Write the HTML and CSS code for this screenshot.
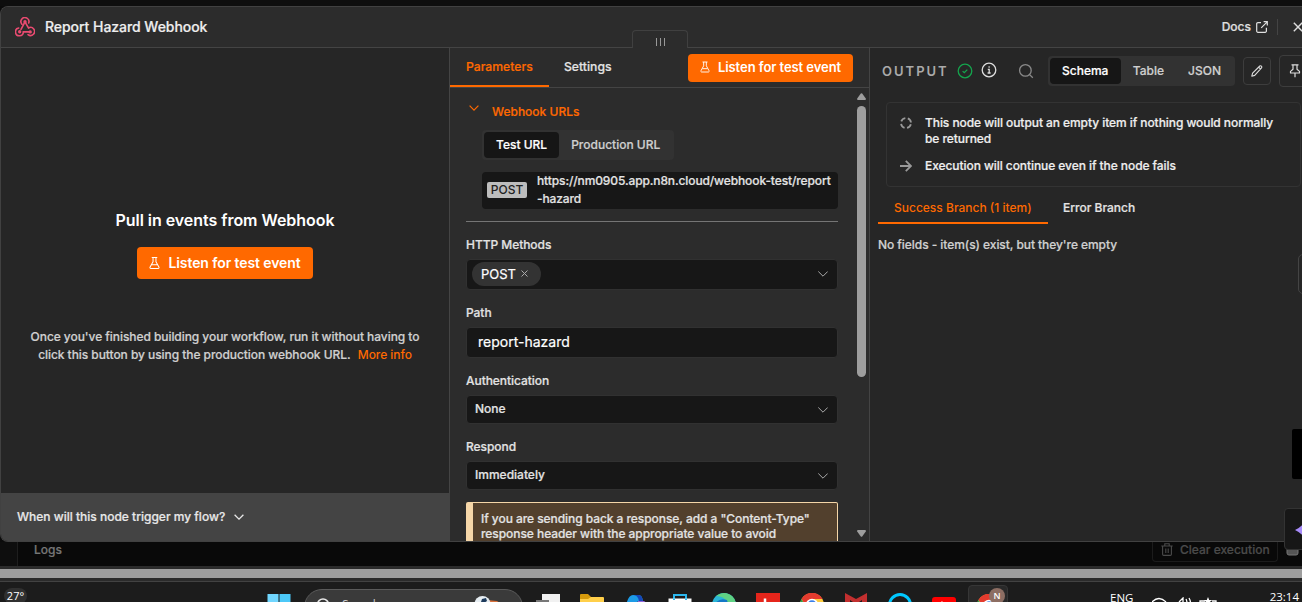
FILE: index.html
```html
<!DOCTYPE html>
<html lang="en">
<head>
    <meta charset="UTF-8">
    <title>Report Hazard Webhook</title>
    <link rel="stylesheet" href="styles.css">
</head>
<body>
    <div class="screen">
        <div class="canvas-top"></div>

        <div class="modal">
            <header class="modal-header">
                <svg class="webhook-icon" viewBox="0 0 20 20" fill="none" stroke="#ea4b71" stroke-width="1.6" stroke-linecap="round">
                    <path d="M6.9 7.2A4 4 0 1 1 13.7 6M10 4.8L6 12.4M10 4.8l3.5 6.2a4 4 0 1 1-.4 6.6M14.8 14.9H8.3A3.9 3.9 0 1 1 3.7 11"/>
                    <circle cx="10" cy="4.8" r=".9" fill="#ea4b71"/>
                    <circle cx="4.7" cy="14.8" r=".9" fill="#ea4b71"/>
                    <circle cx="15.2" cy="14.9" r=".9" fill="#ea4b71"/>
                </svg>
                <h1>Report Hazard Webhook</h1>
                <a href="#" class="docs-link">Docs
                    <svg width="12" height="12" viewBox="0 0 12 12" fill="none" stroke="currentColor" stroke-width="1.2">
                        <path d="M5 1.6H1.9A1.2 1.2 0 0 0 .7 2.8v7.3a1.2 1.2 0 0 0 1.2 1.2h7.3a1.2 1.2 0 0 0 1.2-1.2V6.8M7.6.7h3.7v3.7M11.2.8L5.2 6.8"/>
                    </svg>
                </a>
                <svg class="close-icon" viewBox="0 0 10 10" stroke="#ddd" stroke-width="1.4"><path d="M.8.8l8.4 8.4M9.2.8L.8 9.2"/></svg>
            </header>

            <div class="panels">
                <section class="input-panel">
                    <div class="input-content">
                        <h2>Pull in events from Webhook</h2>
                        <button class="btn-listen btn-large">
                            <svg viewBox="0 0 12 14" fill="none" stroke="#fff" stroke-width="1.1" stroke-linejoin="round"><path d="M3 1h6M4.4 1v4.6L1.2 11.4c-.5.9 0 1.6.9 1.6h7.8c.9 0 1.4-.7.9-1.6L7.6 5.6V1M3 9h6"/></svg>
                            Listen for test event
                        </button>
                        <p>Once you've finished building your workflow, run it without having to<br>click this button by using the production webhook URL.&nbsp; <a href="#">More info</a></p>
                    </div>
                    <div class="trigger-help">
                        When will this node trigger my flow?
                        <svg width="10" height="6" viewBox="0 0 10 6" fill="none" stroke="currentColor" stroke-width="1.3"><path d="M.6.7L5 5.1 9.4.7"/></svg>
                    </div>
                </section>

                <section class="params-panel">
                    <div class="drag-handle"><i></i><i></i><i></i></div>
                    <div class="params-tabs">
                        <span class="params-tab active">Parameters</span>
                        <span class="params-tab">Settings</span>
                        <button class="btn-listen">
                            <svg viewBox="0 0 12 14" fill="none" stroke="#fff" stroke-width="1.1" stroke-linejoin="round"><path d="M3 1h6M4.4 1v4.6L1.2 11.4c-.5.9 0 1.6.9 1.6h7.8c.9 0 1.4-.7.9-1.6L7.6 5.6V1M3 9h6"/></svg>
                            Listen for test event
                        </button>
                    </div>
                    <div class="params-body">
                        <div class="params-form">
                            <div class="urls-title">
                                <svg width="10" height="6" viewBox="0 0 10 6" fill="none" stroke="currentColor" stroke-width="1.2"><path d="M.6.7L5 5.1 9.4.7"/></svg>
                                Webhook URLs
                            </div>
                            <div class="urls">
                                <div class="toggle url-toggle">
                                    <span class="toggle-item active">Test URL</span>
                                    <span class="toggle-item">Production URL</span>
                                </div>
                                <div class="url-box">
                                    <span class="method">POST</span>
                                    <span class="url">https://nm0905.app.n8n.cloud/webhook-test/report<br>-hazard</span>
                                </div>
                            </div>
                            <div class="field">
                                <label>HTTP Methods</label>
                                <div class="control tags">
                                    <span class="tag">POST <svg width="7" height="7" viewBox="0 0 7 7" stroke="#aaa" stroke-width="1"><path d="M.5.5l6 6M6.5.5l-6 6"/></svg></span>
                                    <svg class="arrow" viewBox="0 0 10 6" fill="none" stroke="currentColor"><path d="M.3.5L5 5.2 9.7.5"/></svg>
                                </div>
                            </div>
                            <div class="field">
                                <label>Path</label>
                                <div class="control path">report-hazard</div>
                            </div>
                            <div class="field small">
                                <label>Authentication</label>
                                <div class="control">None
                                    <svg class="arrow" viewBox="0 0 10 6" fill="none" stroke="currentColor"><path d="M.3.5L5 5.2 9.7.5"/></svg>
                                </div>
                            </div>
                            <div class="field small">
                                <label>Respond</label>
                                <div class="control">Immediately
                                    <svg class="arrow" viewBox="0 0 10 6" fill="none" stroke="currentColor"><path d="M.3.5L5 5.2 9.7.5"/></svg>
                                </div>
                            </div>
                            <div class="notice">If you are sending back a response, add a "Content-Type"<br>response header with the appropriate value to avoid</div>
                        </div>
                        <div class="scrollbar">
                            <svg width="9" height="7" viewBox="0 0 9 7" fill="#9e9e9e"><path d="M3.8.6a.9.9 0 0 1 1.4 0L8.8 5.6Q9.2 7 8 7H1Q-.2 7 .2 5.6z"/></svg>
                            <div class="thumb"></div>
                            <svg class="down" width="9" height="7" viewBox="0 0 9 7" fill="#9e9e9e"><path d="M3.8 6.4a.9.9 0 0 0 1.4 0L8.8 1.4Q9.2 0 8 0H1Q-.2 0 .2 1.4z"/></svg>
                        </div>
                    </div>
                </section>

                <section class="output-panel">
                    <div class="output-header">
                        <span class="output-title">OUTPUT</span>
                        <svg class="status" viewBox="0 0 16 16" fill="none" stroke="#14a44d" stroke-width="1.3"><circle cx="8" cy="8" r="6.8"/><path d="M5.6 8.1l1.7 1.6 3-3.1"/></svg>
                        <svg class="info" viewBox="0 0 16 16" fill="none" stroke="#ddd" stroke-width="1.3"><circle cx="8" cy="8" r="6.8"/><path d="M6.8 7.4H8.2v3.6M6.6 11h3M7.5 5h1.2"/></svg>
                        <svg class="search" viewBox="0 0 16 16" fill="none" stroke="#8a8a8a" stroke-width="1.3"><circle cx="7.4" cy="7.4" r="5.8"/><path d="M11.6 11.6l3.2 3.2"/></svg>
                        <div class="toggle view-toggle">
                            <span class="toggle-item active">Schema</span>
                            <span class="toggle-item">Table</span>
                            <span class="toggle-item">JSON</span>
                        </div>
                        <span class="icon-btn">
                            <svg width="12" height="12" viewBox="0 0 12 12" fill="none" stroke="#ddd" stroke-width="1.1" stroke-linejoin="round"><path d="M.8 11.2l.8-3L8.8 1q.8-.6 1.6.1.8.9.1 1.7L3.7 10.4zM7.6 2.2l2 2"/></svg>
                        </span>
                        <span class="icon-btn pin">
                            <svg width="12" height="14" viewBox="0 0 12 14" fill="none" stroke="#ddd" stroke-width="1.2" stroke-linejoin="round"><path d="M2.5.8h7M4 .8v4.4L1.5 7.4V9h9V7.4L8 5.2V.8M6 9v4.3"/></svg>
                        </span>
                    </div>
                    <div class="info-box">
                        <div class="info-row">
                            <svg width="12" height="12" viewBox="0 0 12 12" fill="none" stroke="#999" stroke-width="1.8"><circle cx="6" cy="6" r="5" stroke-dasharray="5.25 2.6" stroke-dashoffset="-1.3"/></svg>
                            <span>This node will output an empty item if nothing would normally<br>be returned</span>
                        </div>
                        <div class="info-row">
                            <svg width="12" height="12" viewBox="0 0 12 12" fill="none" stroke="#999" stroke-width="1.8"><path d="M0 6h11M5.8.8L11 6l-5.2 5.2"/></svg>
                            <span>Execution will continue even if the node fails</span>
                        </div>
                    </div>
                    <div class="branches">
                        <span class="branch active">Success Branch (1 item)</span>
                        <span class="branch">Error Branch</span>
                    </div>
                    <p class="empty">No fields - item(s) exist, but they're empty</p>
                </section>
            </div>
        </div>

        <div class="logs-bar">
            <div class="rail"></div>
            <span class="logs">Logs</span>
            <span class="clear">
                <svg width="12" height="13" viewBox="0 0 12 13" fill="none" stroke="currentColor" stroke-width="1.1"><path d="M.3 3h11.4M3.8 3V.7h4.4V3M1.6 3v8.3q0 1.1 1.1 1.1h6.6q1.1 0 1.1-1.1V3M4.8 5.5v4.4M7.2 5.5v4.4"/></svg>
                Clear execution
            </span>
            <svg class="popout" width="14" height="14" viewBox="0 0 14 14" fill="#555" stroke="#777"><rect x="1" y="1" width="11" height="12" rx="2"/></svg>
        </div>
        <div class="h-scroll"><div></div></div>

        <footer class="taskbar">
            <span class="weather">27°</span>
            <span class="app">
                <svg width="24" height="24" viewBox="0 0 24 24" fill="#4cc8f8"><path d="M.5 0h11v11.5H.5z" fill="#70d6ff"/><path d="M12.5 0h11v11.5h-11zM.5 12.5h11v11H.5zM12.5 12.5h11v11h-11z"/></svg>
            </span>
            <div class="task-search">
                <svg width="14" height="14" viewBox="0 0 14 14" fill="none" stroke="#e8e8e8" stroke-width="1.6"><circle cx="7" cy="6.5" r="5.5"/></svg>
                <span>Search</span>
                <svg class="ball" width="26" height="14" viewBox="0 0 26 14"><path d="M13 4l10 1 3 2-4 7H11z" fill="#d8703a"/><circle cx="8.5" cy="8" r="8" fill="#e6edf2"/><path d="M8 3l4-1 1 3-3 2-3-1zM1 7l3 1v4H1zM12 9l3-1v5h-3z" fill="#1d3a5c"/></svg>
            </div>
            <span class="app">
                <svg width="24" height="24" viewBox="0 0 24 24"><path d="M6 0h18v14H6z" fill="#f1f1f1"/><path d="M0 6h13v12H0z" fill="#777"/></svg>
            </span>
            <span class="app">
                <svg width="24" height="24" viewBox="0 0 24 24"><path d="M0 1q0-1 1-1h7l3 3v8H0z" fill="#d69a0c"/><path d="M0 5h8l3-2h12q1 0 1 1v17H0z" fill="#ffcf4a"/></svg>
            </span>
            <span class="app">
                <svg width="24" height="24" viewBox="0 0 24 24"><path d="M2 12Q4 1 9 1h6q3 0 4 6h-5l-3 6z" fill="#1c9be6"/><path d="M9 1h6q3 0 4 6h-4q-1-6-6-6z" fill="#1546b8"/><path d="M14 7h6q3 1 2 7H13z" fill="#9365d8"/></svg>
            </span>
            <span class="app">
                <svg width="24" height="24" viewBox="0 0 24 24"><path d="M6 6V1h12v5" fill="none" stroke="#2cb7ee" stroke-width="2"/><path d="M.5 4.5h23V20H.5z" fill="#fff"/><path d="M5 4.5h2V6H5zM17 4.5h2V6h-2z" fill="#2cb7ee"/></svg>
            </span>
            <span class="app app-up">
                <svg width="24" height="24" viewBox="0 0 24 24"><circle cx="12" cy="12" r="12" fill="#2bb6d6"/><path d="M12 0a12 12 0 0 1 12 12h-8Q14 3 4 3 8 0 12 0z" fill="#5fd283"/><path d="M2 12q5-8 13-5l2 7H1z" fill="#1477c6"/></svg>
            </span>
            <span class="app app-up">
                <svg width="24" height="24" viewBox="0 0 24 24"><path d="M0 0h24v24H0z" fill="#e5251b"/><path d="M9 5.500v10h7" fill="none" stroke="#fff" stroke-width="2.5"/></svg>
            </span>
            <span class="app app-up">
                <svg width="24" height="24" viewBox="0 0 24 24"><circle cx="12" cy="12" r="12" fill="#ffcc3d"/><path d="M1.5 6a12 12 0 0 1 21 0H12L7 15z" fill="#e33b2e"/><path d="M1.5 6L8 18H2Q-2 12 1.5 6z" fill="#2e9f4d"/><circle cx="12" cy="12" r="5.5" fill="#3a7ee8" stroke="#fff" stroke-width="1.5"/></svg>
            </span>
            <span class="app app-up">
                <svg width="24" height="24" viewBox="0 0 24 24"><path d="M1 0l11 6 11-6v20H1z" fill="#c22f2f"/><path d="M6 7l6 4 6-4v10H6z" fill="#1c1c1c"/></svg>
            </span>
            <span class="app app-up">
                <svg width="24" height="24" viewBox="0 0 24 24" fill="none" stroke="#00c8ff" stroke-width="3"><circle cx="12" cy="12" r="10.5"/></svg>
            </span>
            <span class="app youtube">
                <svg width="24" height="17" viewBox="0 0 24 17"><rect width="24" height="17" rx="3" fill="#f00"/><path d="M9.5 4l7 4.5-7 4z" fill="#fff"/></svg>
            </span>
            <span class="app running">
                <svg width="24" height="24" viewBox="0 0 24 24"><circle cx="12" cy="12" r="12" fill="#ffcc3d"/><path d="M1.5 6a12 12 0 0 1 21 0H12L7 15z" fill="#e33b2e"/><path d="M1.5 6L8 18H2Q-2 12 1.5 6z" fill="#2e9f4d"/><circle cx="12" cy="12" r="5.5" fill="#3a7ee8" stroke="#fff" stroke-width="1.5"/></svg>
                <b>N</b>
            </span>
            <span class="lang">ENG</span>
            <svg class="tray" width="66" height="12" viewBox="0 0 66 12" fill="none" stroke="#fff" stroke-width="1.3">
                <path d="M0 5q7-7 14 0M3 8q4-4 8 0M27 5l4-4v9M34 2q2 4 0 8M37 1q3 5 0 9M53 4h-5v6h16V4h-4"/>
                <path d="M56 0l1.2 3h3l-2.4 2 1 3-2.8-2-2.8 2 1-3-2.4-2h3z" fill="#fff" stroke="none"/>
            </svg>
            <span class="clock">23:14</span>
        </footer>

        <!-- floating widgets on the right edge -->
        <div class="edge-tab"></div>
        <div class="edge-block"></div>
        <div class="assistant">
            <svg width="20" height="20" viewBox="0 0 20 20" fill="#a78bfa"><path d="M10 0q1.5 7 10 10-8.5 3-10 10-1.500-6-10-10 8.500-4 10-10z"/></svg>
        </div>
    </div>
</body>
</html>
```
FILE: styles.css
```css
* {
    margin: 0;
    padding: 0;
    box-sizing: border-box;
}

body {
    font-family: Inter, "Liberation Sans", sans-serif;
    font-size: 12px;
    font-weight: 500;
    color: #e3e3e3;
    background: #0b0b0b;
    white-space: nowrap;
    -webkit-text-stroke: 0.2px;
}

svg {
    display: block;
    flex: none;
}

a {
    text-decoration: none;
}

button {
    border: none;
    font-family: inherit;
}

.screen {
    position: relative;
    width: 1302px;
    height: 602px;
    overflow: hidden;
    display: flex;
    flex-direction: column;
}

.canvas-top {
    height: 6px;
    background: #0e0e0e;
}

/* node modal */
.modal {
    height: 536px;
    border: 1px solid #414141;
    border-right: none;
    border-radius: 8px 0 0 8px;
    background: #262626;
    display: flex;
    flex-direction: column;
}

.modal-header {
    height: 41px;
    border-bottom: 1px solid #444;
    border-radius: 7px 0 0 0;
    background: #2c2c2c;
    display: flex;
    align-items: center;
    padding: 0 0 1px 14px;
}

.webhook-icon {
    width: 20px;
    height: 20px;
}

.modal-header h1 {
    margin-left: 10px;
    flex: 1;
    font-size: 14px;
    font-weight: 500;
    letter-spacing: -0.05px;
    color: #eee;
}

.docs-link {
    display: flex;
    align-items: center;
    gap: 5px;
    height: 16px;
    padding-right: 9px;
    border-right: 1px solid #444;
    color: #e0e0e0;
}

.close-icon {
    width: 10px;
    height: 10px;
    margin: 0 -1px 0 15px;
}

.panels {
    flex: 1;
    min-height: 0;
    display: flex;
}

/* left panel */
.input-panel {
    width: 449px;
    flex: none;
    border-right: 1px solid #444;
    display: flex;
    flex-direction: column;
    text-align: center;
}

.input-content {
    flex: 1;
    display: flex;
    flex-direction: column;
    align-items: center;
    padding-top: 162px;
}

.input-content h2 {
    font-size: 16px;
    line-height: 20px;
    font-weight: 600;
    letter-spacing: -0.04px;
    color: #fff;
    -webkit-text-stroke: 0;
}

.input-content p {
    margin-top: 49px;
    line-height: 18px;
    letter-spacing: -0.06px;
    color: #d0d0d0;
}

.input-content p a {
    color: #ff6900;
    margin-left: 1px;
    -webkit-text-stroke: 0;
}

.btn-listen {
    display: flex;
    align-items: center;
    justify-content: center;
    gap: 8px;
    width: 165px;
    height: 28px;
    padding-bottom: 2px;
    border-radius: 4px;
    background: #ff6900;
    color: #fff;
    font-size: 13px;
    font-weight: 600;
    letter-spacing: -0.07px;
    -webkit-text-stroke: 0;
}

.btn-listen svg {
    width: 10px;
    height: 12px;
}

.btn-large {
    margin-top: 17px;
    width: 176px;
    height: 32px;
    padding-bottom: 1px;
    font-size: 14px;
    letter-spacing: -0.1px;
}

.btn-large svg {
    width: 11px;
    height: 14px;
}

.trigger-help {
    height: 48px;
    background: #444;
    border-radius: 0 0 0 7px;
    display: flex;
    align-items: center;
    gap: 9px;
    padding: 0 0 1px 16px;
    color: #e8e8e8;
}

/* parameters */
.params-panel {
    position: relative;
    width: 420px;
    flex: none;
    background: #2c2c2c;
    border-right: 1px solid #444;
    display: flex;
    flex-direction: column;
}

.drag-handle {
    position: absolute;
    left: 182px;
    top: -18px;
    width: 56px;
    height: 18px;
    border: 1px solid #404040;
    border-bottom: none;
    border-radius: 4px 4px 0 0;
    background: #2c2c2c;
    display: flex;
    justify-content: center;
    gap: 3px;
    padding-top: 7px;
}

.drag-handle i {
    width: 1px;
    height: 8px;
    background: #999;
}

.params-tabs {
    height: 40px;
    border-bottom: 1px solid #444;
    display: flex;
    align-items: flex-start;
}

.params-tab {
    height: 39px;
    padding: 11px 16px 0 15px;
    line-height: 16px;
    font-size: 12.2px;
}

.params-tab.active {
    width: 99px;
    padding: 11px 0 0 16px;
    color: #ff6900;
    border-bottom: 2px solid #ff6900;
}

.params-tabs .btn-listen {
    margin: 6px 16px 0 auto;
}

.params-body {
    flex: 1;
    min-height: 0;
    overflow: hidden;
    display: flex;
}

.params-form {
    width: 388px;
    padding-left: 16px;
}

.urls-title {
    display: flex;
    gap: 13px;
    height: 42px;
    padding: 16px 0 0 3px;
    line-height: 16px;
    color: #ff6900;
}

.urls-title svg {
    margin-top: 1px;
}

.urls {
    padding-left: 16px;
    padding-bottom: 12px;
    border-bottom: 1px solid #757575;
}

.toggle {
    display: inline-flex;
    flex: none;
    height: 30px;
    padding: 2px;
    border-radius: 4px;
    background: #323232;
    vertical-align: top;
}

.toggle-item {
    padding: 0 12px;
    line-height: 26px;
    border-radius: 4px;
    color: #cfcfcf;
}

.toggle-item.active {
    background: #161616;
    color: #fff;
}

.url-toggle {
    width: 192px;
}

.view-toggle {
    width: 187px;
}

.view-toggle .toggle-item.active {
    width: 72px;
    padding-left: 12px;
}

.url-box {
    display: flex;
    align-items: center;
    height: 37px;
    margin-top: 12px;
    padding-left: 5px;
    border-radius: 4px;
    background: #171717;
}

.method {
    width: 40px;
    height: 16px;
    margin-bottom: 1px;
    line-height: 16px;
    text-align: center;
    border-radius: 2px;
    background: #bdbdbd;
    color: #222;
    -webkit-text-stroke: 0;
}

.url {
    margin-left: 10px;
    padding-bottom: 2px;
    line-height: 18px;
    letter-spacing: -0.11px;
}

.field label {
    display: block;
    line-height: 16px;
    padding-top: 15px;
    height: 37px;
    letter-spacing: -0.05px;
}

.control {
    display: flex;
    align-items: center;
    justify-content: space-between;
    height: 31px;
    padding: 0 9px 1px;
    border: 1px solid #313131;
    border-radius: 4px;
    background: #171717;
}

.small .control {
    height: 29px;
    padding-left: 8px;
    padding-bottom: 2px;
}

.small .arrow {
    margin-top: 2px;
}

.arrow {
    width: 10px;
    height: 6px;
    color: #aaa;
}

.tags {
    padding-left: 5px;
}

.tag {
    display: flex;
    align-items: center;
    gap: 5px;
    height: 24px;
    width: 69px;
    padding-left: 9px;
    border-radius: 12px;
    background: #333;
    color: #fff;
    font-size: 13px;
    font-weight: 400;
}

.tag svg {
    margin-bottom: 2px;
}

.control.path {
    padding-left: 11px;
    padding-bottom: 3px;
    color: #fff;
    font-size: 14px;
    font-weight: 400;
}

.notice {
    height: 60px;
    margin-top: 12px;
    padding: 8px 0 0 8px;
    border: 1px solid #f5d6a8;
    border-left-width: 7px;
    background: #52402d;
    line-height: 15px;
    letter-spacing: -0.06px;
    border-radius: 2px 2px 0 0;
}

.scrollbar {
    width: 9px;
    margin-left: 19px;
    padding: 5px 0 4px;
    display: flex;
    flex-direction: column;
}

.thumb {
    height: 271px;
    margin-top: 6px;
    border-radius: 5px;
    background: #9e9e9e;
}

.down {
    margin-top: auto;
}

/* output */
.output-panel {
    flex: 1;
    min-width: 0;
    overflow: hidden;
    padding-left: 8px;
}

.output-header {
    display: flex;
    align-items: center;
    height: 46px;
    padding-left: 4px;
}

.output-title {
    width: 75px;
    flex: none;
    letter-spacing: 2px;
    color: #aaa;
    font-size: 13px;
    font-weight: 600;
    -webkit-text-stroke: 0;
}

.status,
.info,
.search {
    width: 16px;
    height: 16px;
}

.info {
    margin: -2px 0 0 8px;
}

.search {
    margin: 0 14px 0 21px;
}

.icon-btn {
    display: flex;
    align-items: center;
    justify-content: center;
    flex: none;
    width: 28px;
    height: 28px;
    margin-left: 8px;
    border: 1px solid #3d3d3d;
    border-radius: 4px;
}

.pin {
    width: 32px;
    height: 32px;
}

.info-box {
    width: 415px;
    height: 85px;
    margin: 8px 0 0 8px;
    padding: 12px 13px;
    border: 1px solid #333;
    border-radius: 4px;
    display: flex;
    flex-direction: column;
    gap: 11px;
    color: #eee;
}

.info-row {
    display: flex;
    gap: 13px;
    line-height: 16px;
    letter-spacing: -0.07px;
}

.info-row svg {
    margin-top: 2px;
}

.branches {
    display: flex;
    height: 37px;
}

.branch {
    padding: 13px 16px 0 15px;
    line-height: 16px;
}

.branch.active {
    width: 170px;
    padding-left: 16px;
    color: #ff6900;
    border-bottom: 2px solid #ff6900;
    -webkit-text-stroke: 0;
}

.empty {
    margin-top: 13px;
    line-height: 16px;
    letter-spacing: -0.06px;
    color: #d0d0d0;
}

/* bottom of the editor, behind the modal */
.logs-bar {
    height: 24px;
    background: #090909;
    display: flex;
    color: #777;
    overflow: hidden;
}

.rail {
    width: 18px;
    background: #0e0e0e;
    border-right: 1px solid #1e1e1e;
}

.logs {
    margin-left: 16px;
    line-height: 16px;
}

.clear {
    display: flex;
    align-items: center;
    gap: 7px;
    width: 126px;
    height: 20px;
    margin-left: auto;
    padding: 0 0 4px 8px;
    border: 1px solid #1c1c1c;
    border-top: none;
    border-radius: 0 0 4px 4px;
    color: #4b4b4b;
}

.popout {
    margin: 0 2px 0 8px;
}

.h-scroll {
    height: 16px;
    padding: 3px 0;
    background: #2b2b2b;
    border-bottom: 1px solid #424242;
}

.h-scroll div {
    height: 9px;
    background: #9e9e9e;
}

/* windows taskbar */
.taskbar {
    flex: 1;
    min-height: 0;
    overflow: hidden;
    display: flex;
    align-items: flex-start;
    background: #1c1c1c;
    color: #fff;
    font-family: "Open Sans", sans-serif;
    font-size: 11px;
    font-weight: 400;
    -webkit-text-stroke: 0;
}

.weather {
    width: 23px;
    height: 16px;
    margin: 6px 230px 0 4px;
    border-radius: 8px;
    background: #303030;
    text-align: center;
    line-height: 16px;
}

.app {
    position: relative;
    width: 44px;
    padding: 12px 10px 0;
    flex: none;
}

.app-up {
    padding-top: 11px;
}

.task-search {
    display: flex;
    width: 219px;
    height: 36px;
    margin: 7px 3px 0;
    padding: 8px 0 0 11px;
    border: 1px solid #5a5a5a;
    border-radius: 18px;
    background: #3a3a3a;
    color: #ccc;
    font-size: 12px;
    line-height: 16px;
}

.task-search span {
    margin: -1px 0 0 12px;
}

.task-search .ball {
    margin: -2px 22px 0 auto;
}

.youtube {
    padding-top: 15px;
}

.running {
    width: 40px;
    height: 36px;
    margin: 3px 2px 0;
    padding: 8px 8px 0;
    border: 1px solid #363636;
    border-radius: 4px;
    background: #292929;
}

.running b {
    position: absolute;
    left: 20px;
    top: 2px;
    width: 16px;
    height: 16px;
    border-radius: 50%;
    background: #8d6e63;
    font-size: 9px;
    font-weight: 600;
    line-height: 16px;
    text-align: center;
}

.lang {
    margin: 8px 0 0 100px;
    font-size: 11.5px;
}

.tray {
    margin: 15px 0 0 19px;
}

.clock {
    margin: 7px 3px 0 auto;
    font-size: 11.5px;
}

/* right edge */
.edge-tab {
    position: absolute;
    left: 1298px;
    top: 254px;
    width: 12px;
    height: 40px;
    border: 1px solid #444;
    border-radius: 5px;
}

.edge-block {
    position: absolute;
    left: 1292px;
    top: 429px;
    width: 12px;
    height: 50px;
    border-radius: 2px;
    background: #000;
}

.assistant {
    position: absolute;
    left: 1284px;
    top: 508px;
    width: 42px;
    height: 42px;
    padding: 11px 10px;
    border: 1px solid #333;
    border-radius: 4px;
    background: #171717;
}
```
